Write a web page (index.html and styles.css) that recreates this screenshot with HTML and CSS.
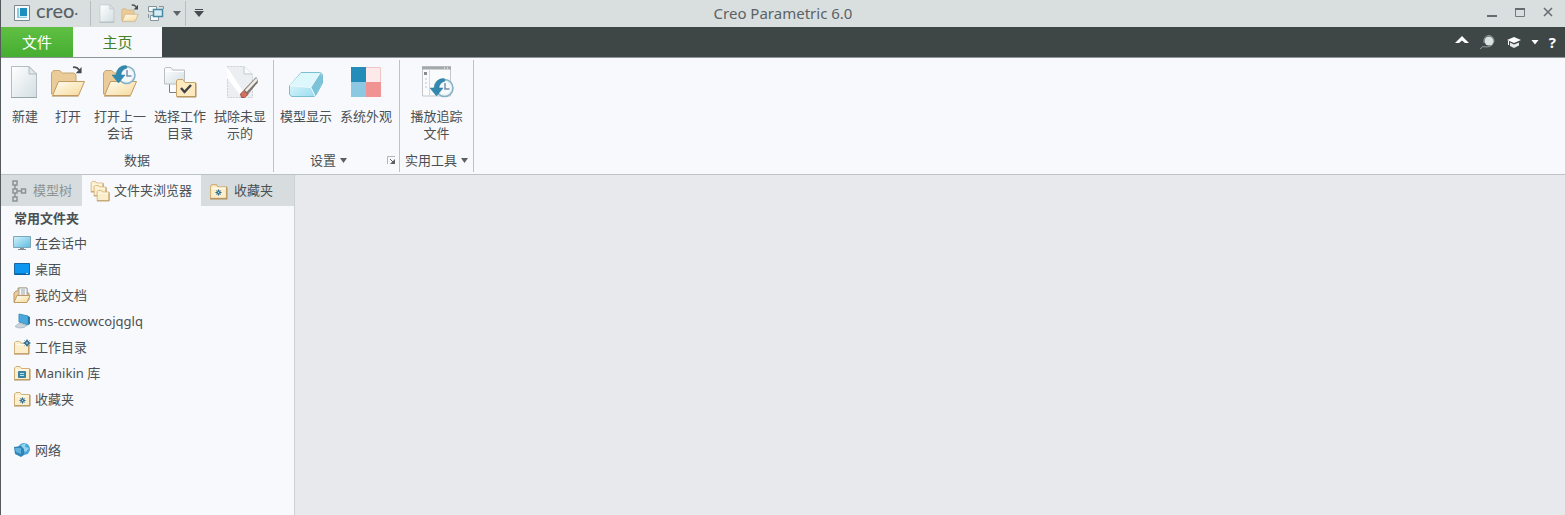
FILE: index.html
```html
<!DOCTYPE html>
<html lang="zh-CN">
<head>
<meta charset="utf-8">
<title>Creo Parametric 6.0</title>
<link rel="stylesheet" href="styles.css">
</head>
<body>
<svg class="defs" aria-hidden="true">
  <defs>
    <linearGradient id="page" x1="0" y1="0" x2="1" y2="1"><stop offset="0" stop-color="#ffffff"/><stop offset="1" stop-color="#d3dee3"/></linearGradient>
    <linearGradient id="front" x1="0" y1="0" x2="1" y2="1"><stop offset="0" stop-color="#fffdf2"/><stop offset="1" stop-color="#f6d99b"/></linearGradient>
    <linearGradient id="ice" x1="0" y1="0" x2="1" y2="1"><stop offset="0" stop-color="#f2fdff"/><stop offset="1" stop-color="#8fd8ee"/></linearGradient>
    <linearGradient id="screen" x1="0" y1="0" x2="1" y2="1"><stop offset="0" stop-color="#d5f3fb"/><stop offset="1" stop-color="#5bbce4"/></linearGradient>
    <symbol id="new" viewBox="0 0 34 34">
      <path d="M3.500 1.500H21L28.500 9V32.500H3.500Z" fill="url(#page)" stroke="#b3bdc2"/>
      <path d="M21 1.500V9H28.500Z" fill="#dfe6e9" stroke="#b3bdc2"/>
      <path d="M3 32.500H29" stroke="#98a5ab"/>
    </symbol>
    <symbol id="openfolder" viewBox="0 0 36 34">
      <path d="M1.500 29V8L3.500 5.500H9.500L12.500 8H24L26 10V18L7 30Z" fill="#ebcb98" stroke="#c6a571"/>
      <path d="M8.500 16.500H34.500L28.500 30.500H2.500Z" fill="url(#front)" stroke="#c19a60" stroke-linejoin="round"/>
      <path d="M2 31.500H28.500" stroke="#cfc0a5"/>
    </symbol>
    <symbol id="arrow" viewBox="0 0 12 10">
      <path d="M1 1.500Q5 .5 8 4.500" fill="none" stroke="#4c5153" stroke-width="2"/><path d="M10.500 1V8H4Z" fill="#44494b"/>
    </symbol>
    <symbol id="clock" viewBox="0 0 24 20">
      <circle cx="14.500" cy="10" r="8.500" fill="#e6eef4" stroke="#82b0c4" stroke-width="1.500"/>
      <circle cx="14.500" cy="10" r="6.500" fill="#f7fafc"/>
      <path d="M15 5V11H19.500" fill="none" stroke="#7a8db0" stroke-width="1.500"/>
      <path d="M14 .5Q5 .5 4 10H0L6.500 18L13 10H9Q9 5 15 3Z" fill="#3289b0" stroke="#2a7699" stroke-width=".5"/>
    </symbol>
    <symbol id="folder" viewBox="0 0 18 16">
      <path d="M1.500 14.500V3L3 1.500H7L8.500 3.500H16.500V14.500Z" fill="#fdeecb" stroke="#d0af78"/>
      <path d="M2.500 5H16" stroke="#fffdf4"/><path d="M1 15H17V4" fill="none" stroke="#b08d58"/>
    </symbol>
    <symbol id="spark" viewBox="0 0 8 8">
      <path d="M4 0L5.500 2.500L8 4L5.500 5.500L4 8L2.500 5.500L0 4L2.500 2.500Z" fill="#2f6f91"/><path d="M1.500 1.500L6.500 6.500M6.500 1.500L1.500 6.500" stroke="#4a839e"/><circle cx="4" cy="4" r=".8" fill="#b5dbe9"/>
    </symbol>
  </defs>
</svg>

<div class="app">
  <header class="titlebar">
    <div class="quick">
      <svg class="logo" viewBox="0 0 18 18"><path d="M1.500 1.500H16.500V16.500H1.500Z" fill="#f8fbfc" stroke="#7b898f"/><path d="M4 4H14V14H4Z" fill="#8ccbe2"/><path d="M7 4H14V12H7Z" fill="#1c8fbf"/><path d="M6.500 4V12.500H14" fill="none" stroke="#d8eef6"/></svg>
      <span class="brand">creo<span class="reg">·</span></span>
      <span class="rule"></span>
      <button class="tool" aria-label="新建文件"><svg width="19" height="19" viewBox="0 0 34 34"><use href="#new" width="34" height="34"/></svg></button>
      <button class="tool" aria-label="打开文件"><svg width="19" height="19" viewBox="0 0 19 19"><use href="#openfolder" y="2" width="18" height="17"/><use href="#arrow" x="10" width="8" height="7"/></svg></button>
      <button class="tool" aria-label="窗口"><svg width="18" height="18" viewBox="0 0 18 18"><g stroke="#82959d"><path d="M1.500 2.500H9.500V7.500H1.500Z" fill="#f6fafb"/><path d="M3.500 11.500H11.500V16.500H3.500Z" fill="#f6fafb"/><path d="M6.500 5.500H15.500V12.500H6.500Z" fill="#d6edf5" stroke="#4889a4" stroke-width="1.500"/></g><path d="M12 2.500H16.500V5M1.500 10V14" fill="none" stroke="#82959d"/></svg></button>
      <button class="drop" aria-label="窗口菜单"><svg width="8" height="5"><path d="M0 0H8L4 5Z" fill="#5c6669"/></svg></button>
      <span class="rule short"></span>
      <button class="drop" aria-label="自定义快速访问工具栏"><svg width="10" height="8"><path d="M1 0H9V1H1ZM0 2H10L5 8Z" fill="#454d50"/></svg></button>
    </div>
    <h1 class="title">Creo Parametric 6.0</h1>
    <div class="window">
      <button aria-label="最小化"><svg width="12" height="12"><path d="M1 9H11" stroke="#646c6f" stroke-width="2"/></svg></button>
      <button aria-label="最大化"><svg width="12" height="12"><path d="M1.500 1.500H10.500V9.500H1.500Z" fill="none" stroke="#70787b"/><path d="M1 2H11" stroke="#646c6f" stroke-width="2"/></svg></button>
      <button aria-label="关闭"><svg width="12" height="12"><path d="M2 1L10 9M10 1L2 9" stroke="#646c6f" stroke-width="1.500"/></svg></button>
    </div>
  </header>

  <nav class="tabs">
    <button class="file">文件</button>
    <button class="home">主页</button>
    <div class="help">
      <button aria-label="最小化功能区"><svg width="14" height="14"><path d="M0 8L7 1L14 8H10L7 5.500L4 8Z" fill="#fff"/></svg></button>
      <button aria-label="搜索"><svg width="18" height="16"><path d="M1 15Q4 11 7 13Q15 13 14.500 6" fill="none" stroke="#939d9e"/><circle cx="10" cy="7" r="4.500" fill="#dce1e1"/><path d="M5 9Q4 2 10 1.500Q15 2 15 8" fill="none" stroke="#939d9e"/></svg></button>
      <button aria-label="学习"><svg width="14" height="14"><path d="M0 5L7 2L14 5L7 8Z" fill="#fff"/><path d="M3 7.500L7 9.500L12 7.500V10.500L7 13L3 11Z" fill="#e7eaea"/><path d="M1.500 6V10" stroke="#fff"/></svg></button>
      <button aria-label="学习菜单"><svg width="8" height="14"><path d="M.5 5H7.500L4 9.500Z" fill="#fff"/></svg></button>
      <button class="question" aria-label="帮助">?</button>
    </div>
  </nav>

  <section class="ribbon" aria-label="主页">
    <div class="group">
      <div class="commands">
        <button class="command small"><svg width="34" height="34"><use href="#new"/></svg><span>新建</span></button>
        <button class="command small"><svg width="36" height="34"><use href="#openfolder"/><use href="#arrow" x="22" y="1" width="11" height="9"/></svg><span>打开</span></button>
        <button class="command"><svg width="36" height="34"><use href="#openfolder"/><use href="#clock" x="10" y="0" width="24" height="20"/></svg><span>打开上一<br>会话</span></button>
        <button class="command"><svg width="36" height="34"><path d="M7.500 18V27.500H15" fill="#fff" stroke="#7c8387"/><path d="M2.500 19V3.500L4 2.500H9L11 5H22.500V19Z" fill="url(#page)" stroke="#b8bec1"/><path d="M3 6.500H22" stroke="#fff"/><path d="M14.500 31.500V15.500L16 14.500H21L23 17.500H33.500V31.500Z" fill="#ffe9bf" stroke="#caa468"/><path d="M15 32H34V18" fill="none" stroke="#b08d58"/><path d="M19 23L22.500 27L29 20" fill="none" stroke="#404446" stroke-width="2.500"/></svg><span>选择工作<br>目录</span></button>
        <button class="command"><svg width="36" height="34"><path d="M5.500 1.500H22L30.500 9V32.500H5.500Z" fill="#eceff1" stroke="#cbd1d4" stroke-dasharray="2 1"/><path d="M22 1.500V9H30" fill="#f9fafb" stroke="#c2c9cc"/><path d="M5 2L25 32H20L5 13Z" fill="#fff"/><path d="M22 25L34 12.500L36 16L26 29Z" fill="#b6aea7" stroke="#8c8782"/><path d="M24 26L35 14" stroke="#f2eee8" stroke-width="2"/><path d="M24 29L35.500 17" stroke="#77726e" stroke-width="1.500"/><path d="M18.500 29L22 25.500L26 29.500L22.500 32.500H19.500Z" fill="#d4705f" stroke="#9d5146"/></svg><span>拭除未显<br>示的</span></button>
      </div>
      <div class="caption">数据</div>
    </div>
    <div class="group settings">
      <div class="commands">
        <button class="command"><svg width="36" height="34"><path d="M13 7.500H31Q34 7.500 34.500 10V18L28 30Q27 31.500 25 31.500H4Q2 31 1.500 29V21Z" fill="url(#ice)" stroke="#7cbfd4" stroke-linejoin="round"/><path d="M13 8H32L23 22L2 20Z" fill="#dcf8fd"/><path d="M32 8L34 11V18L27 31L23 22Z" fill="#7cc3da"/><path d="M2 20.500L23 22.500L27 31M23 22L32 8" fill="none" stroke="#f2feff"/></svg><span>模型显示</span></button>
        <button class="command"><svg width="32" height="34"><path d="M1 2H16V17H1Z" fill="#248cb8"/><path d="M16 2H31V17H16Z" fill="#fde9e9"/><path d="M1 17H16V32H1Z" fill="#8cc8e2"/><path d="M16 17H31V32H16Z" fill="#ef9393"/><path d="M16 2.500H30.500V17" fill="none" stroke="#efc6c6"/></svg><span>系统外观</span></button>
      </div>
      <div class="caption"><button class="menu">设置<svg width="7" height="5"><path d="M0 0H7L3.500 5Z"/></svg></button><button class="launcher" aria-label="设置选项"><svg width="9" height="9"><path d="M.5 8V.5H8" fill="none" stroke="#b0b7ba"/><path d="M3 3L7 7" stroke="#596164"/><path d="M8 3V8H3Z" fill="#596164"/></svg></button></div>
    </div>
    <div class="group utility">
      <div class="commands">
        <button class="command"><svg width="34" height="34"><path d="M2.500 1.500H30.500V31H2.500Z" fill="#fafbfc" stroke="#c3c7c9"/><path d="M2 1.500H31V4.500H2Z" fill="#a3a8aa"/><path d="M24 3H25M27 3H28" stroke="#fff"/><path d="M9.500 5V31" stroke="#d5d9db"/><path d="M4 7H7V10H4Z" fill="#858b8e"/><path d="M5 14H7M5 18H7M5 22H7" stroke="#c0c5c8"/><use href="#clock" x="10" y="13" width="24" height="20"/></svg><span>播放追踪<br>文件</span></button>
      </div>
      <div class="caption"><button class="menu">实用工具<svg width="7" height="5"><path d="M0 0H7L3.500 5Z"/></svg></button></div>
    </div>
  </section>

  <div class="workspace">
    <aside class="side">
      <div class="sidetabs">
        <button class="tree"><svg width="16" height="22"><g fill="none" stroke="#8b9395" stroke-width="1.500"><path d="M2 1H6V5H2ZM2 9H6V13H2ZM2 17H6V21H2ZM10.500 9H14.500V13H10.500ZM4 5V9M4 13V17M6 11H10"/></g></svg>模型树</button>
        <button class="browser"><svg width="20" height="22"><use href="#folder" y="0" width="14" height="13"/><use href="#folder" x="3" y="4" width="14" height="13"/><use href="#folder" x="6" y="9" width="14" height="13"/></svg>文件夹浏览器</button>
        <button class="favorites"><svg width="19" height="18"><use href="#folder" y="1" width="19" height="17"/><use href="#spark" x="6" y="7" width="7" height="7"/></svg>收藏夹</button>
      </div>
      <h2>常用文件夹</h2>
      <ul>
        <li><a href="#session"><svg viewBox="0 0 18 16"><path d="M.5 1.500H17.500V12.500H.5Z" fill="url(#screen)" stroke="#7fa6b8"/><path d="M7 13H11V14H7Z" fill="#869297"/><path d="M5 14.500H13" stroke="#829097"/></svg>在会话中</a></li>
        <li><a href="#desktop"><svg viewBox="0 0 18 16"><path d="M1.500 2.500H16.500V13.500H1.500Z" fill="#0c96ef" stroke="#1966a1"/><path d="M2 13H16" stroke="#075795"/><path d="M13 12.500H15" stroke="#b6e5fa"/></svg>桌面</a></li>
        <li><a href="#documents"><svg viewBox="0 0 18 16"><path d="M1 15V6L3 4H5V1H14V6H16V13Z" fill="#ebcb98" stroke="#c09a65"/><path d="M6 1H14V9H6Z" fill="#f8fafa" stroke="#9ea6a8"/><path d="M8 3H12M8 5H12M8 7H12" stroke="#9aa4a8"/><path d="M4 8.500H17L14 15.500H1Z" fill="url(#front)" stroke="#c09a65"/></svg>我的文档</a></li>
        <li><a href="#computer"><svg viewBox="0 0 18 16"><path d="M6 1L15 3V12L6 9Z" fill="#48a8df" stroke="#4b91b7"/><path d="M15 3L17 4V11L15 12Z" fill="#287ba9"/><path d="M7 10L14 12.500L11 14.500Q5 16 2 13.500L5 11Z" fill="#cbd5dc" stroke="#a1b1bc" stroke-width=".7"/></svg>ms-ccwowcojqglq</a></li>
        <li><a href="#working"><svg viewBox="0 0 18 16"><use href="#folder" y="1" width="17" height="15"/><use href="#spark" x="10" width="8" height="8"/></svg>工作目录</a></li>
        <li><a href="#manikin"><svg viewBox="0 0 18 16"><use href="#folder" width="18" height="16"/><path d="M5.500 6.500H12.500V12.500H5.500Z" fill="#3188ac" stroke="#3f7f9a"/><path d="M7 8.500H11M7 10.500H11" stroke="#b9e1ee"/></svg>Manikin 库</a></li>
        <li><a href="#favorites"><svg viewBox="0 0 18 16"><use href="#folder" width="18" height="16"/><use href="#spark" x="6" y="6" width="7" height="7"/></svg>收藏夹</a></li>
        <li class="network"><a href="#network"><svg viewBox="0 0 18 16"><circle cx="11" cy="7" r="6" fill="#4aa4d6"/><path d="M8 3L13 1L12 5L16 6L13 10L9 8Z" fill="#90d4ef"/><path d="M1 5L8 4L11 7V13L8 15L2 12Z" fill="#3184b5"/><path d="M2 6L8 6V12L3 10Z" fill="#5cb3df"/></svg>网络</a></li>
      </ul>
    </aside>
    <main class="canvas" aria-label="图形窗口"></main>
  </div>
</div>
</body>
</html>
```
FILE: styles.css
```css
* { box-sizing: border-box; }
body {
  margin: 0;
  font-family: "Noto Sans", "Noto Sans CJK SC", sans-serif;
  font-size: 13px;
  line-height: 17px;
  color: #4b5053;
}
button { font: inherit; color: inherit; background: none; border: 0; padding: 0; }
svg { display: block; flex: none; }
h1, h2, ul { margin: 0; padding: 0; }
.defs { position: absolute; width: 0; height: 0; }
.app { min-height: 100vh; display: flex; flex-direction: column; border-left: 1px solid #555b5d; }

.titlebar { display: grid; grid-template-columns: 1fr auto 1fr; height: 27px; background: #d9dfdf; align-items: center; padding-bottom: 2px; }
.quick { display: flex; align-items: center; padding-left: 12px; }
.logo { width: 18px; height: 18px; }
.brand { font-family: Lato, sans-serif; font-size: 20px; line-height: 20px; font-weight: 500; width: 44px; margin: 0 10px 3px 5px; color: #596266; white-space: nowrap; }
.reg { font-size: 13px; }
.rule { width: 1px; height: 25px; background: #b6bebf; margin-right: 6px; }
.tool { display: flex; justify-content: center; width: 26px; }
.tool:first-of-type { width: 20px; }
.drop { padding: 4px; }
.short { margin: 0 4px 0 0; }
.title { font-size: 15px; line-height: 20px; font-weight: 400; color: #5b6265; }
.window { display: flex; justify-content: flex-end; gap: 16px; padding-right: 11px; }

.tabs { display: flex; height: 31px; background: #3e4646; border-bottom: 1px solid #8f9697; }
.tabs > button { font-size: 15px; line-height: 20px; }
.file { width: 72px; color: #fff; background: linear-gradient(#60bf43, #45ae31); }
.home { width: 89px; color: #418127; background: #f7f9fc; }
.help { display: flex; align-items: center; margin-left: auto; padding-right: 9px; gap: 10px; }
.question { font-size: 15px; font-weight: 700; color: #fff; }

.ribbon { display: flex; height: 117px; background: #f7f9fc; border-bottom: 1px solid #bdc2c4; }
.group { display: flex; flex-direction: column; border-right: 1px solid #bec2c6; margin: 2px 0; padding: 5px 3px 0; }
.settings { padding-left: 2px; }
.utility { padding: 5px 5px 0; }
.utility .commands { justify-content: center; }
.commands { display: flex; flex: 1; }
.command { width: 60px; display: flex; flex-direction: column; align-items: center; justify-content: flex-start; gap: 9px; white-space: nowrap; }
.small { width: 42px; }
.small + .small { width: 44px; }
.caption { display: flex; align-items: center; justify-content: center; position: relative; height: 20px; margin-bottom: 2px; }
.menu { display: flex; align-items: center; gap: 4px; fill: #596164; }
.settings .caption { padding-right: 15px; }
.launcher { position: absolute; right: 0; top: 6px; }

.workspace { flex: 1; display: flex; }
.side { width: 294px; background: #f7f9fc; border-right: 1px solid #ccd1d4; }
.sidetabs { display: flex; height: 31px; background: #d7ddde; }
.sidetabs button { display: flex; align-items: center; }
.tree { width: 81px; padding-left: 10px; gap: 6px; color: #8d9496; }
.sidetabs .browser { width: 119px; padding-left: 8px; gap: 4px; background: #f7f9fc; white-space: nowrap; }
.sidetabs .favorites { padding-left: 8px; gap: 6px; }
.side h2 { font-size: 13px; line-height: 24px; font-weight: 700; padding-left: 13px; }
.side ul { list-style: none; padding-left: 12px; }
.side a { display: flex; align-items: center; gap: 4px; height: 26px; color: inherit; text-decoration: none; }
.side a svg { width: 18px; height: 16px; }
.network { margin-top: 25px; }
.canvas { flex: 1; background: #e7e9ed; }
```
